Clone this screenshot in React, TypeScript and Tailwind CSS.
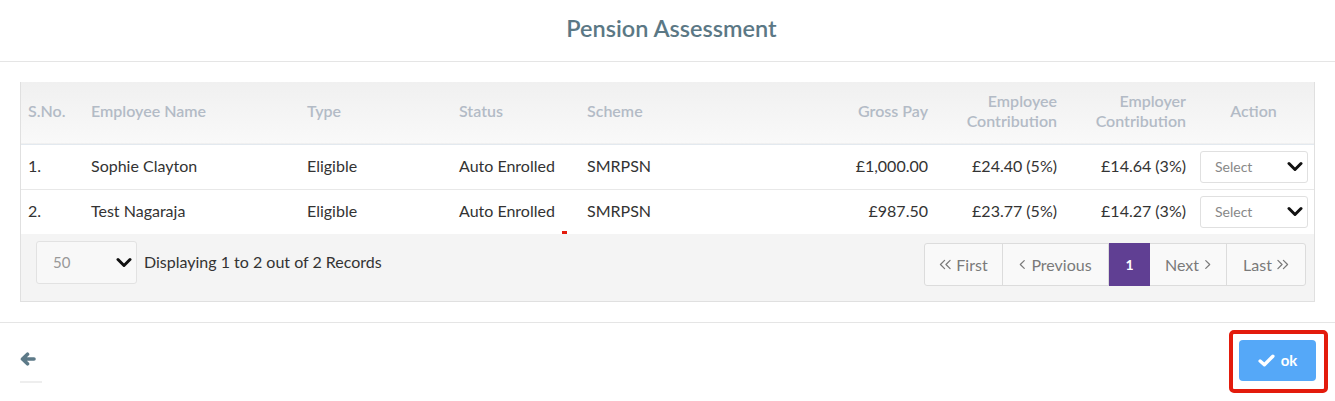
import React from "react";

const font = { fontFamily: "Lato, 'Noto Sans', sans-serif" };

const rows = [
  { no: "1.", name: "Sophie Clayton", type: "Eligible", status: "Auto Enrolled", scheme: "SMRPSN", gross: "£1,000.00", ee: "£24.40 (5%)", er: "£14.64 (3%)" },
  { no: "2.", name: "Test Nagaraja", type: "Eligible", status: "Auto Enrolled", scheme: "SMRPSN", gross: "£987.50", ee: "£23.77 (5%)", er: "£14.27 (3%)" },
];

const Chevron = ({ className }: { className?: string }) => (
  <svg viewBox="0 0 16 10" className={className} fill="none" stroke="currentColor" strokeWidth="3" strokeLinecap="round" strokeLinejoin="round">
    <path d="M2 2l6 6 6-6" />
  </svg>
);

// thin pagination arrows, single or double
const PageArrow = ({ dir, double }: { dir: "left" | "right"; double?: boolean }) => (
  <svg viewBox={double ? "0 0 14 12" : "0 0 8 12"} className={double ? "w-[13px] h-[11px]" : "w-[7px] h-[11px]"} fill="none" stroke="currentColor" strokeWidth="1.4" strokeLinecap="round" strokeLinejoin="round">
    {dir === "left" ? (
      <>
        <path d="M6 1.5L1.5 6 6 10.5" />
        {double && <path d="M12 1.5L7.5 6 12 10.5" />}
      </>
    ) : (
      <>
        <path d="M2 1.5L6.5 6 2 10.5" />
        {double && <path d="M8 1.5L12.5 6 8 10.5" />}
      </>
    )}
  </svg>
);

const App = () => {
  return (
    <div className="w-[1335px] h-[401px] bg-white text-[#333] overflow-hidden" style={font}>
      {/* Header */}
      <div className="h-[62px] border-b border-[#e5e5e5] flex items-center justify-center pl-[8px]">
        <h2 className="text-[23.5px] font-semibold text-[#5b7885] -mt-[4px]">Pension Assessment</h2>
      </div>

      {/* Body */}
      <div className="px-[20px] pt-[20px] pb-[20px] border-b border-[#e5e5e5]">
        <div className="border-x border-b border-[#e0e0e0]">
          <table className="w-full table-fixed border-collapse text-[16px]">
            <colgroup>
              <col className="w-[63px]" />
              <col className="w-[216px]" />
              <col className="w-[152px]" />
              <col className="w-[128px]" />
              <col />
              <col className="w-[106px]" />
              <col className="w-[129px]" />
              <col className="w-[129px]" />
              <col className="w-[121px]" />
            </colgroup>
            <thead>
              <tr className="h-[62px] bg-gradient-to-b from-[#f0f0f0] to-[#f9f9f9] border-b border-[#e3e9ef] text-[#b3bbc6] font-semibold leading-[20px]">
                <th className="text-left font-semibold pl-[7px] pb-[4px]">S.No.</th>
                <th className="text-left font-semibold pl-[7px] pb-[4px]">Employee Name</th>
                <th className="text-left font-semibold pl-[7px] pb-[4px]">Type</th>
                <th className="text-left font-semibold pl-[7px] pb-[4px]">Status</th>
                <th className="text-left font-semibold pl-[7px] pb-[4px]">Scheme</th>
                <th className="text-right font-semibold pr-[7px] pb-[4px]">Gross Pay</th>
                <th className="text-right font-semibold pr-[7px] pb-[4px]">Employee<br />Contribution</th>
                <th className="text-right font-semibold pr-[7px] pb-[4px]">Employer<br />Contribution</th>
                <th className="text-center font-semibold pb-[4px]">Action</th>
              </tr>
            </thead>
            <tbody>
              {rows.map((r, i) => (
                <tr key={r.no} className={`h-[45px] ${i === 0 ? "border-b border-[#e8e8e8]" : ""}`}>
                  <td className="pl-[7px] pb-[2px]">{r.no}</td>
                  <td className="pl-[7px] pb-[2px]">{r.name}</td>
                  <td className="pl-[7px] pb-[2px]">{r.type}</td>
                  <td className="pl-[7px] pb-[2px] relative">
                    {r.status}
                    {i === 1 && <span className="absolute left-[110px] bottom-0 w-[5px] h-[3px] bg-[#e31b0c]" />}
                  </td>
                  <td className="pl-[7px] pb-[2px]">{r.scheme}</td>
                  <td className="text-right pr-[7px] pb-[2px]">{r.gross}</td>
                  <td className="text-right pr-[7px] pb-[2px]">{r.ee}</td>
                  <td className="text-right pr-[7px] pb-[2px]">{r.er}</td>
                  <td className="pl-[7px] pr-[6px]">
                    <div className="h-[32px] border border-[#e0e0e0] rounded-[3px] flex items-center justify-between pl-[14px] pr-[4px] text-[14px] text-[#888]">
                      <span>Select</span>
                      <Chevron className="w-[16px] h-[11px] text-[#111]" />
                    </div>
                  </td>
                </tr>
              ))}
            </tbody>
          </table>

          {/* Table footer */}
          <div className="h-[67px] bg-[#f4f4f4] flex items-start justify-between pl-[15px] pr-[8px]">
            <div className="flex items-center gap-[7px] pt-[7px]">
              <div className="w-[101px] h-[43px] bg-[#f8f8f8] border border-[#e2e2e2] rounded-[3px] flex items-center justify-between pl-[16px] pr-[4px] text-[15px] text-[#999]">
                <span>50</span>
                <Chevron className="w-[16px] h-[11px] text-[#111]" />
              </div>
              <span className="text-[16px] text-[#333] -mt-[2px]">Displaying 1 to 2 out of 2 Records</span>
            </div>
            <div className="pt-[9px]">
              <div className="flex h-[43px] border border-[#dcdcdc] rounded-[3px] bg-[#f9f9f9] text-[16px] text-[#7a7a7a]">
                <button className="w-[78px] border-r border-[#dcdcdc] flex items-center justify-center gap-[4px]"><PageArrow dir="left" double />First</button>
                <button className="w-[106px] border-r border-[#dcdcdc] flex items-center justify-center gap-[5px]"><PageArrow dir="left" />Previous</button>
                <button className="w-[41px] -my-[1px] bg-[#603f93] text-white font-bold text-[14px] flex items-center justify-center">1</button>
                <button className="w-[77px] border-r border-[#dcdcdc] flex items-center justify-center gap-[5px]">Next<PageArrow dir="right" /></button>
                <button className="w-[78px] flex items-center justify-center gap-[4px]">Last<PageArrow dir="right" double /></button>
              </div>
            </div>
          </div>
        </div>
      </div>

      {/* Bottom bar */}
      <div className="flex items-start justify-between pl-[20px] pr-[7px] pt-[7px]">
        <div className="pt-[22px] flex flex-col">
          <svg viewBox="0 0 16 14" className="w-[16px] h-[14px] text-[#5d7a88]" fill="none" stroke="currentColor" strokeWidth="3.6" strokeLinecap="round" strokeLinejoin="round">
            <path d="M14 7H3.5M7.5 2.2L2.5 7l5 4.8" />
          </svg>
          <div className="mt-[15px] w-[22px] h-[2px] bg-[#eeeeee]" />
        </div>
        <div className="border-[4px] border-[#e31b0c] rounded-[5px] pt-[6px] pl-[6px] pr-[8px] pb-[8px]">
          <button className="w-[77px] h-[41px] bg-[#55a8f8] rounded-[4px] text-white font-bold text-[15px] flex items-center justify-center gap-[6px]">
            <svg viewBox="0 0 16 12" className="w-[17px] h-[13px]" fill="none" stroke="currentColor" strokeWidth="3.2" strokeLinecap="round" strokeLinejoin="round">
              <path d="M2 6.5l4 3.5 8-8" />
            </svg>
            ok
          </button>
        </div>
      </div>
    </div>
  );
};

export default App;
